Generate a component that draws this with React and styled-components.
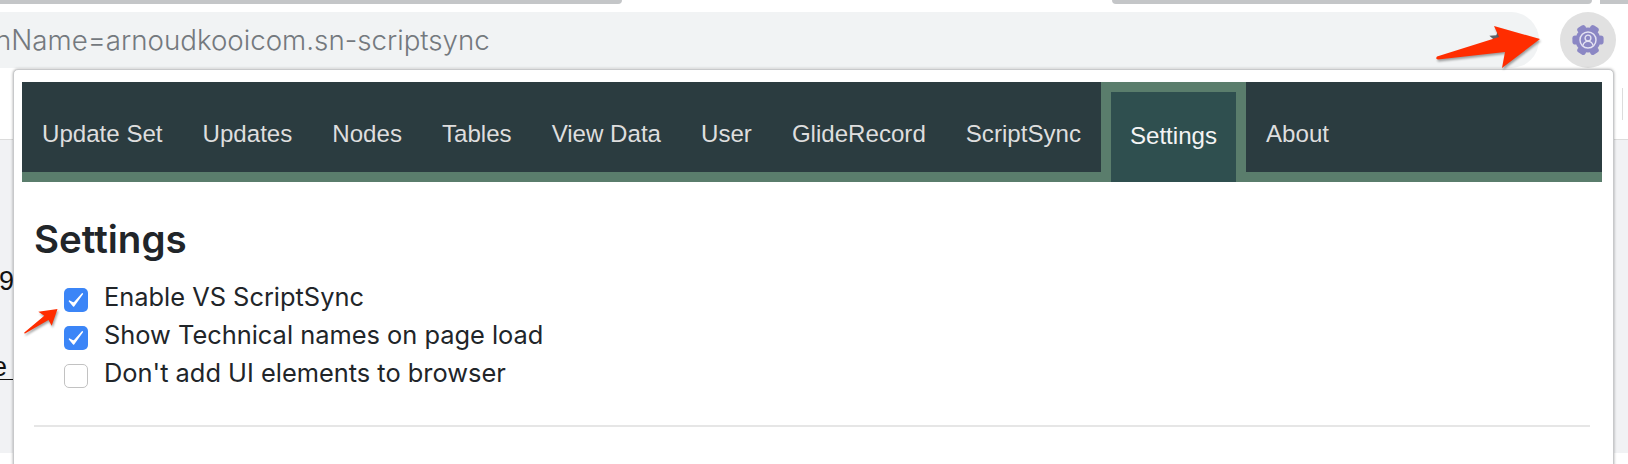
import React from 'react';
import styled, { createGlobalStyle } from 'styled-components';

const Global = createGlobalStyle`
  html, body { margin: 0; padding: 0; background: #fff; }
  #root { width: 1628px; height: 464px; overflow: hidden; }
`;

const Screen = styled.div`
  position: relative;
  width: 1628px;
  height: 464px;
  overflow: hidden;
  background: #fff;
  font-family: "Liberation Sans", Arial, sans-serif;
`;

const TabStrip = styled.div`
  display: flex;
  height: 12px;
  box-sizing: border-box;
`;

const TabEdge = styled.div`
  width: ${p => p.$w}px;
  margin-left: ${p => p.$gap || 0}px;
  height: 3.5px;
  background: #c4c6c8;
  border-bottom-left-radius: ${p => (p.$roundL ? 6 : 0)}px;
  border-bottom-right-radius: ${p => (p.$roundR ? 6 : 0)}px;
`;

const Toolbar = styled.div`
  display: flex;
  gap: 21px;
  height: 56px;
`;

const AddressBar = styled.div`
  display: flex;
  align-items: center;
  justify-content: space-between;
  width: 1539px;
  height: 56px;
  overflow: hidden;
  background: #f1f3f4;
  border-radius: 0 28px 28px 0;
`;

const Url = styled.span`
  margin-left: -5px;
  font-family: Inter, "Liberation Sans", sans-serif;
  font-size: 27.7px;
  font-weight: 300;
  color: #74797e;
  white-space: nowrap;
`;

const Star = styled.svg`
  width: 22px;
  height: 22px;
  margin-right: 29px;
  margin-top: -5px;
  fill: #5f6368;
`;

const ExtensionButton = styled.div`
  display: flex;
  align-items: center;
  justify-content: center;
  width: 56px;
  height: 56px;
  border-radius: 50%;
  background: #e1e1e1;
`;

const PageTop = styled.div`
  position: relative;
  height: 71px;
  border-bottom: 1px solid #dcdcdc;
`;

const SideRule = styled.div`
  position: absolute;
  right: 5px;
  top: 20px;
  width: 1px;
  height: 32px;
  background: #dcdcdc;
`;

const PageBody = styled.div`
  height: 313px;
  padding-top: 121px;
  box-sizing: border-box;
  background: #f1f2f4;
  font-size: 27px;
  line-height: 40px;
  color: #111;
`;

const Digit = styled.div`
  height: 81px;
  margin-left: -1px;
`;

const PageLink = styled.div`
  width: 13px;
  height: 38px;
  overflow: hidden;
  white-space: pre;
  border-bottom: 1.5px solid #111;
  box-sizing: border-box;
  text-indent: -8px;
  line-height: 50px;
`;

const Popup = styled.div`
  position: absolute;
  left: 13px;
  top: 69px;
  width: 1601px;
  height: 420px;
  box-sizing: border-box;
  padding: 12px 11px 0 8px;
  background: #fff;
  border: 1px solid #c8c9cb;
  border-radius: 5px;
  box-shadow: 0 0 3px rgba(0, 0, 0, 0.35);
`;

const Nav = styled.nav`
  display: flex;
  align-items: flex-start;
  height: 90px;
  padding-left: 0;
  background: #2b3c40;
  border-bottom: 10px solid #5a7d6c;
`;

const NavItem = styled.div`
  box-sizing: border-box;
  padding: ${p => (p.$active ? '30px 19px 0' : '38px 20px 0')};
  height: ${p => (p.$active ? 100 : 90)}px;
  font-size: 24.1px;
  line-height: 28px;
  color: ${p => (p.$active ? '#f4f4f4' : '#dedede')};
  background: ${p => (p.$active ? '#2f4f4f' : 'transparent')};
  border: ${p => (p.$active ? '10px solid #5a7d6c' : '0')};
  border-bottom: 0;
  margin-bottom: ${p => (p.$active ? -10 : 0)}px;
  white-space: nowrap;
`;

const Content = styled.div`
  padding: 0 12px;
  color: #212529;
  font-family: Inter, "Liberation Sans", sans-serif;
`;

const Title = styled.h2`
  margin: 0;
  padding-top: 34px;
  font-size: 38.5px;
  line-height: 46px;
  font-weight: 600;
`;

const Options = styled.div`
  display: flex;
  flex-direction: column;
  padding: 16px 0 33px 30px;
  border-bottom: 2px solid #e6e6e6;
`;

const Option = styled.label`
  display: flex;
  align-items: flex-start;
  gap: 16px;
  height: 38px;
  font-size: 25.4px;
  line-height: 38px;
`;

const Box = styled.span`
  display: flex;
  align-items: center;
  justify-content: center;
  flex: none;
  box-sizing: border-box;
  width: 24px;
  height: 24px;
  margin-top: 10px;
  border-radius: 5px;
  background: ${p => (p.$on ? '#3b85f7' : '#fff')};
  border: ${p => (p.$on ? '0' : '1.5px solid #c2c2c2')};
`;

const Arrow = styled.svg`
  position: absolute;
  left: ${p => p.$x}px;
  top: ${p => p.$y}px;
  overflow: visible;
  filter: drop-shadow(1px 2px 1px rgba(0, 0, 0, 0.35));
`;

const Gear = () => {
  const teeth = [0, 60, 120, 180, 240, 300];
  return (
    <svg width="32" height="32" viewBox="-16 -16 32 32">
      <circle r="12.5" fill="#8b87c4" />
      {teeth.map(a => (
        <rect key={a} x="10" y="-4.6" width="5.6" height="9.2" rx="2.8" fill="#8b87c4" transform={`rotate(${a})`} />
      ))}
      <circle r="8" fill="none" stroke="#e4e2f2" strokeWidth="1.5" />
      <circle cy="-2" r="2.9" fill="none" stroke="#e4e2f2" strokeWidth="1.4" />
      <path d="M-5 5.5 C-4.4 2.2 -2 1.4 0 1.4 C2 1.4 4.4 2.2 5 5.5" fill="none" stroke="#e4e2f2" strokeWidth="1.4" />
    </svg>
  );
};

const Check = () => (
  <svg width="18" height="18" viewBox="0 0 18 18">
    <path d="M2.4 10 L6.6 15 L15.4 2.800 L6.900 12.300 Z" fill="#fff" stroke="#fff" strokeWidth="1.4" strokeLinecap="round" strokeLinejoin="round" />
  </svg>
);

const tabs = ['Update Set', 'Updates', 'Nodes', 'Tables', 'View Data', 'User', 'GlideRecord', 'ScriptSync', 'Settings', 'About'];
const options = [
  ['Enable VS ScriptSync', true],
  ['Show Technical names on page load', true],
  ["Don't add UI elements to browser", false],
];

export default function App() {
  return (
    <Screen>
      <Global />
      <TabStrip>
        <TabEdge $w={622} $roundR />
        <TabEdge $w={480} $gap={490} $roundL $roundR />
        <TabEdge $w={28} $gap={8} />
      </TabStrip>
      <Toolbar>
        <AddressBar>
          <Url>nName=arnoudkooicom.sn-scriptsync</Url>
          <Star viewBox="0 0 24 24"><path d="M12 2l3 6.9 7.5.7-5.7 4.9 1.7 7.3L12 17.9l-6.5 3.9 1.7-7.3L1.500 9.600 9 8.900z" /></Star>
        </AddressBar>
        <ExtensionButton><Gear /></ExtensionButton>
      </Toolbar>
      <PageTop><SideRule /></PageTop>
      <PageBody>
        <Digit>9</Digit>
        <PageLink>e </PageLink>
      </PageBody>
      <Popup>
        <Nav>
          {tabs.map(t => <NavItem key={t} $active={t === 'Settings'}>{t}</NavItem>)}
        </Nav>
        <Content>
          <Title>Settings</Title>
          <Options>
            {options.map(([text, on]) => (
              <Option key={text}>
                <Box $on={on}>{on && <Check />}</Box>
                {text}
              </Option>
            ))}
          </Options>
        </Content>
      </Popup>
      <Arrow $x={1436} $y={26} width="104" height="42" viewBox="0 0 104 42">
        <path d="M104 13 L58 0 L63 11 L1 30.500 Q-1 33 2 33.500 L69 26 L66 42 Z" fill="#ff2d00" />
      </Arrow>
      <Arrow $x={24} $y={309} width="34" height="25" viewBox="0 0 34 25">
        <path d="M33.500 0 L14.300 2.700 L20.300 6.700 L0.300 23.500 Q0 24.800 1.500 24.200 L24.500 11 L27.700 16.700 Z" fill="#ff2d00" />
      </Arrow>
    </Screen>
  );
}
